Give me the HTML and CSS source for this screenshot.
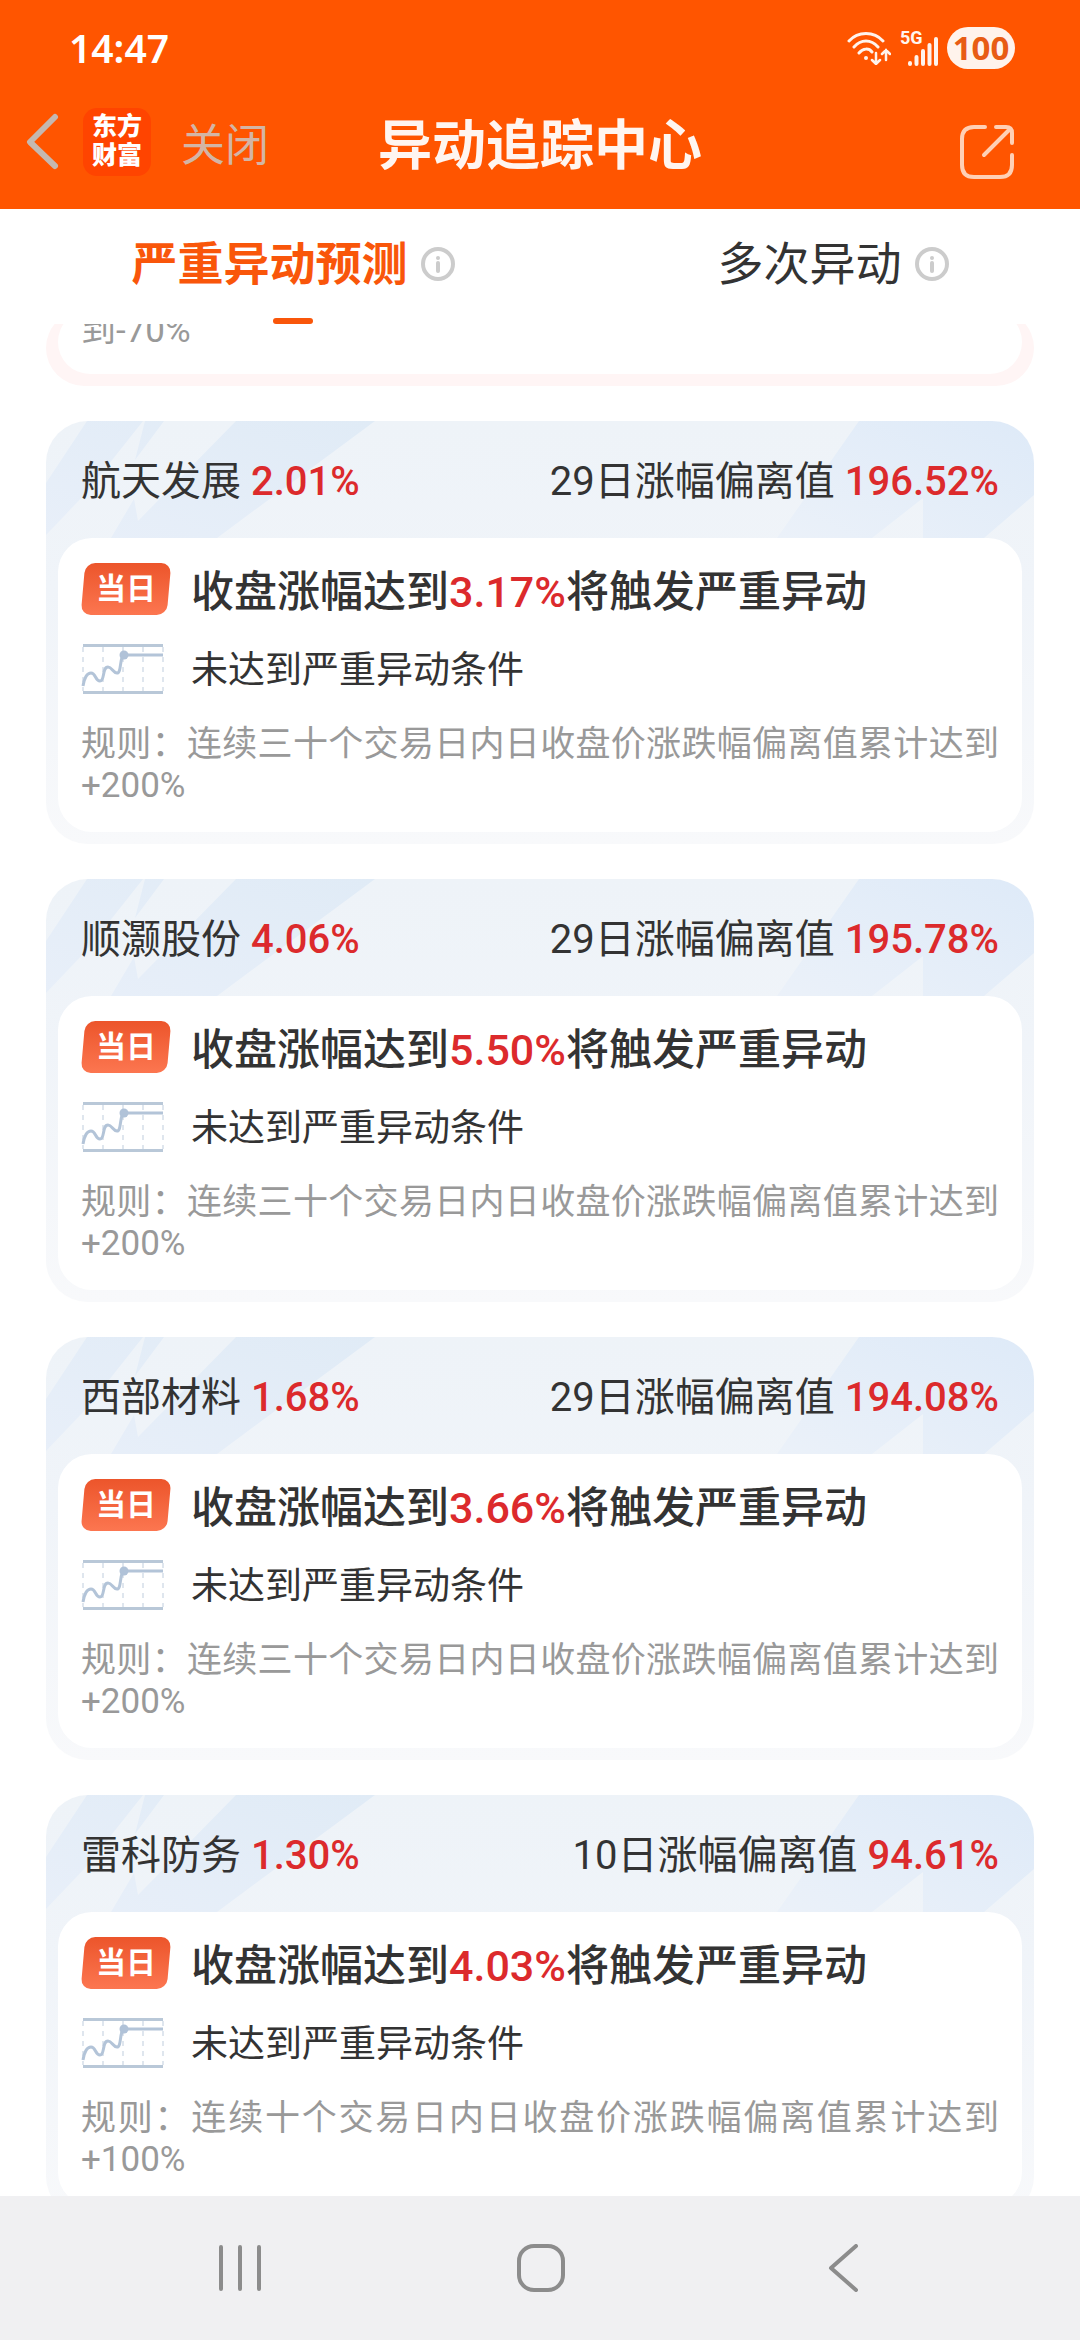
FILE: index.html
```html
<!DOCTYPE html>
<html lang="zh-CN">
<head>
<meta charset="utf-8">
<meta name="viewport" content="width=device-width">
<title>异动追踪中心</title>
<link rel="stylesheet" href="styles.css">
</head>
<body>
<svg class="defs" aria-hidden="true">
  <symbol id="info" viewBox="0 0 34 34">
    <circle cx="17" cy="17" r="15" fill="none" stroke="#ccc" stroke-width="4"/>
    <circle cx="17" cy="11" r="2" fill="#ccc"/>
    <path d="M17 16v8" stroke="#ccc" stroke-width="4" stroke-linecap="round"/>
  </symbol>
  <symbol id="chart" viewBox="0 0 84 52">
    <path d="M2 4v44M22 4v44M42 4v44M62 4v44M82 4v44" stroke="#dfe6ee" stroke-width="2" stroke-dasharray="5 5"/>
    <path d="M2 2.500h80M2 49.500h80" stroke="#b9c8d8" stroke-width="3"/>
    <path d="M2 43C4 31 8 30 10 30C15 30 14 38 19 38C24 38 21 24 27 24C31 24 32 30 36 30C41 30 38 12 44 12H82" fill="none" stroke="#b3c4d8" stroke-width="3"/>
    <circle cx="43" cy="12" r="4.500" fill="#b0c2d8"/>
  </symbol>
</svg>

<header class="top">
  <div class="status">
    <span class="clock">14:47</span>
    <div class="status-icons">
      <svg class="wifi" viewBox="0 0 44 34" fill="none" stroke="#fff3ec" stroke-linecap="round" stroke-width="3">
        <path d="M2 10C11 0 27 0 36 10M7 16C14 8 24 8 31 16M12 22C16 17 22 17 25 21"/>
        <circle cx="19" cy="27" r="2" fill="#fff3ec" stroke="none"/>
        <path d="M29 22v10M25 29l4 4 4-4M39 29V19M35 23l4-4 4 4" stroke-width="2.500"/>
      </svg>
      <div class="mobile">
        <span class="net">5G</span>
        <svg class="bars" viewBox="0 0 30 30" stroke="#fff3ec" stroke-width="4" stroke-linecap="round">
          <path d="M2 27v1M8.500 21v7M15 15v13M21.500 9v19M28 3v25"/>
        </svg>
      </div>
      <span class="battery">100</span>
    </div>
  </div>
  <nav class="titlebar">
    <div class="title-left">
      <button class="icon-btn" aria-label="返回">
        <svg class="back" viewBox="0 0 34 58" fill="none" stroke="#c5b8b0" stroke-width="6" stroke-linecap="round" stroke-linejoin="round"><path d="M29 4L4 29L29 53"/></svg>
      </button>
      <a class="logo" href="#">东方<br>财富</a>
      <button class="close">关闭</button>
    </div>
    <h1>异动追踪中心</h1>
    <div class="title-right">
      <button class="icon-btn" aria-label="分享">
        <svg class="share" viewBox="0 0 54 54" fill="none" stroke="#ffd0b5" stroke-width="4" stroke-linecap="round" stroke-linejoin="round"><path d="M25 2H14Q2 2 2 14V40Q2 52 14 52H40Q52 52 52 40V30M24 30L50 4M36 2H46Q52 2 52 8V18"/></svg>
      </button>
    </div>
  </nav>
</header>

<div class="tabs" role="tablist">
  <button class="tab active" role="tab" aria-selected="true">严重异动预测<svg class="info"><use href="#info"/></svg></button>
  <button class="tab" role="tab" aria-selected="false">多次异动<svg class="info"><use href="#info"/></svg></button>
</div>

<main class="list">
  <article class="card fall">
    <div class="body"><p class="rule">到-70%</p></div>
  </article>

  <article class="card">
    <header class="head"><h2>航天发展 <b>2.01%</b></h2><p>29日涨幅偏离值 <b>196.52%</b></p></header>
    <div class="body">
      <div class="row"><span class="badge">当日</span><p class="trigger">收盘涨幅达到<b>3.17%</b>将触发严重异动</p></div>
      <div class="row"><svg class="chart"><use href="#chart"/></svg><p class="state">未达到严重异动条件</p></div>
      <p class="rule">规则：连续三十个交易日内日收盘价涨跌幅偏离值累计达到+200%</p>
    </div>
  </article>

  <article class="card">
    <header class="head"><h2>顺灏股份 <b>4.06%</b></h2><p>29日涨幅偏离值 <b>195.78%</b></p></header>
    <div class="body">
      <div class="row"><span class="badge">当日</span><p class="trigger">收盘涨幅达到<b>5.50%</b>将触发严重异动</p></div>
      <div class="row"><svg class="chart"><use href="#chart"/></svg><p class="state">未达到严重异动条件</p></div>
      <p class="rule">规则：连续三十个交易日内日收盘价涨跌幅偏离值累计达到+200%</p>
    </div>
  </article>

  <article class="card">
    <header class="head"><h2>西部材料 <b>1.68%</b></h2><p>29日涨幅偏离值 <b>194.08%</b></p></header>
    <div class="body">
      <div class="row"><span class="badge">当日</span><p class="trigger">收盘涨幅达到<b>3.66%</b>将触发严重异动</p></div>
      <div class="row"><svg class="chart"><use href="#chart"/></svg><p class="state">未达到严重异动条件</p></div>
      <p class="rule">规则：连续三十个交易日内日收盘价涨跌幅偏离值累计达到+200%</p>
    </div>
  </article>

  <article class="card">
    <header class="head"><h2>雷科防务 <b>1.30%</b></h2><p>10日涨幅偏离值 <b>94.61%</b></p></header>
    <div class="body">
      <div class="row"><span class="badge">当日</span><p class="trigger">收盘涨幅达到<b>4.03%</b>将触发严重异动</p></div>
      <div class="row"><svg class="chart"><use href="#chart"/></svg><p class="state">未达到严重异动条件</p></div>
      <p class="rule">规则：连续十个交易日内日收盘价涨跌幅偏离值累计达到+100%</p>
    </div>
  </article>
</main>

<nav class="sysnav">
  <button class="icon-btn" aria-label="最近任务"><svg viewBox="0 0 48 48" fill="none" stroke="#8c8c8c" stroke-width="4" stroke-linecap="round"><path d="M5 3v42M24 3v42M43 3v42"/></svg></button>
  <button class="icon-btn" aria-label="主屏幕"><svg viewBox="0 0 48 48" fill="none" stroke="#8c8c8c" stroke-width="4"><rect x="2" y="2" width="44" height="44" rx="15"/></svg></button>
  <button class="icon-btn" aria-label="返回"><svg viewBox="0 0 48 48" fill="none" stroke="#8c8c8c" stroke-width="4" stroke-linecap="round" stroke-linejoin="round"><path d="M37 2L12 24L37 46"/></svg></button>
</nav>
</body>
</html>
```
FILE: styles.css
```css
* { box-sizing: border-box; margin: 0; padding: 0; }

body {
  display: flex;
  flex-direction: column;
  height: 100vh;
  background: #fff;
  color: #333;
  font-family: Roboto, "Noto Sans CJK SC", sans-serif;
  overflow: hidden;
}

button { border: 0; background: none; color: inherit; font: inherit; }
a { color: inherit; text-decoration: none; }
svg { display: block; }
.defs { display: none; }
.icon-btn { display: flex; align-items: center; justify-content: center; }

/* header */
.top { flex: none; background: #f50; color: #fff5f0; }

.status {
  display: flex;
  align-items: center;
  justify-content: space-between;
  height: 96px;
  padding: 0 65px 0 69px;
}
.clock { font: 600 39px/48px "Noto Sans", sans-serif; color: #fff; }
.status-icons { display: flex; align-items: center; gap: 9px; }
.wifi { width: 44px; height: 34px; }
.mobile { display: grid; }
.mobile > * { grid-area: 1 / 1; }
.net { align-self: start; font-size: 18px; line-height: 14px; font-weight: 700; }
.bars { width: 30px; height: 30px; margin: 5px 0 0 8px; }
.battery {
  width: 68px;
  height: 42px;
  border-radius: 21px;
  background: #fff3ec;
  color: #e85c14;
  font: 700 33px/42px "Noto Sans", sans-serif;
  text-align: center;
}

.titlebar {
  display: grid;
  grid-template-columns: 1fr auto 1fr;
  align-items: center;
  height: 113px;
  padding: 0 26px 21px;
}
.title-left { display: flex; align-items: center; }
.title-right { display: flex; justify-content: flex-end; padding: 20px 40px 0 0; }
.back { width: 34px; height: 58px; }
.logo {
  width: 68px;
  height: 68px;
  margin: 0 30px 0 23px;
  padding-top: 4px;
  border-radius: 14px;
  background: #ff4400;
  color: #fff;
  font-size: 25px;
  line-height: 29px;
  font-weight: 900;
  text-align: center;
}
.close { padding-top: 8px; font-size: 44px; line-height: 54px; color: #d3b5a5; }
h1 { padding-top: 9px; font-size: 54px; line-height: 64px; font-weight: 700; }
.share { width: 54px; height: 54px; }

/* tabs */
.tabs { flex: none; display: flex; height: 115px; }
.tab {
  position: relative;
  flex: 1;
  display: flex;
  justify-content: center;
  align-items: center;
  gap: 13px;
  padding: 0 0 6px 46px;
  font-size: 46px;
  line-height: 56px;
}
.tab.active { color: #f9560a; font-weight: 700; }
.tab.active::after {
  content: "";
  position: absolute;
  bottom: 0;
  width: 40px;
  height: 6px;
  border-radius: 3px;
  background: #f9560a;
}
.info { width: 34px; height: 34px; }

/* cards */
.list {
  flex: 1;
  min-height: 0;
  display: flex;
  flex-direction: column;
  gap: 35px;
  padding: 0 46px;
  overflow: hidden;
}
.card {
  flex: none;
  padding: 0 12px 12px;
  border-radius: 42px;
  background:
    url("data:image/svg+xml,%3Csvg xmlns='http://www.w3.org/2000/svg' width='340' height='160'%3E%3ClinearGradient id='g' x1='0' y1='1' x2='1' y2='0'%3E%3Cstop stop-color='%23e8eff9'/%3E%3Cstop offset='1' stop-color='%23e0ebf6'/%3E%3C/linearGradient%3E%3Cpath fill='url(%23g)' d='M41 0H97L40 72L0 114V62ZM99 0H118L89 39ZM190 0H329L171 117H65L88 78L92 100Z'/%3E%3C/svg%3E") left top no-repeat,
    url("data:image/svg+xml,%3Csvg xmlns='http://www.w3.org/2000/svg' width='260' height='120'%3E%3ClinearGradient id='g' x1='0' y1='1' x2='1' y2='0'%3E%3Cstop stop-color='%23ebf1f9'/%3E%3Cstop offset='1' stop-color='%23deeaf8'/%3E%3C/linearGradient%3E%3Cpath fill='url(%23g)' d='M85 0H260V74L210 117H149V77L98 117H3Z'/%3E%3C/svg%3E") right top no-repeat,
    linear-gradient(#eef3f8, #f0f4f9 40%, #f8f9fb);
}
.card.fall { margin-top: -14px; background: #fff5f5; }
.head {
  display: flex;
  justify-content: space-between;
  align-items: center;
  height: 117px;
  padding: 5px 23px 0;
  font-size: 40px;
  line-height: 48px;
}
h2 { font-size: 40px; font-weight: 400; }
b { font-weight: 500; color: #dc2a2c; }
.body {
  padding: 24px 23px 26px;
  border-radius: 34px;
  background: #fff;
}
.fall .body { padding: 0 23px 23px; }
.row { display: flex; align-items: center; gap: 20px; }
.trigger { font-size: 43px; line-height: 60px; font-weight: 500; }
.state { font-size: 37px; line-height: 98px; }
.badge {
  position: relative;
  z-index: 0;
  width: 90px;
  margin-bottom: 6px;
  color: #fff;
  font-size: 30px;
  line-height: 52px;
  font-weight: 700;
  text-align: center;
}
.badge::before {
  content: "";
  position: absolute;
  z-index: -1;
  inset: 0 2px;
  border-radius: 10px;
  background: linear-gradient(#ec552b, #fc7650);
  transform: skewX(-5deg);
}
.chart { width: 84px; height: 52px; margin: 0 6px 4px 0; }
.rule { font-size: 35px; line-height: 41px; color: #999; text-align: justify; }
.row + .rule { margin-top: 4px; }

/* system navigation */
.sysnav {
  flex: none;
  display: grid;
  grid-template-columns: repeat(3, 1fr);
  height: 144px;
  padding: 0 86px 0 89px;
  background: #f0f0f2;
}
.sysnav svg { width: 48px; height: 48px; }
```
